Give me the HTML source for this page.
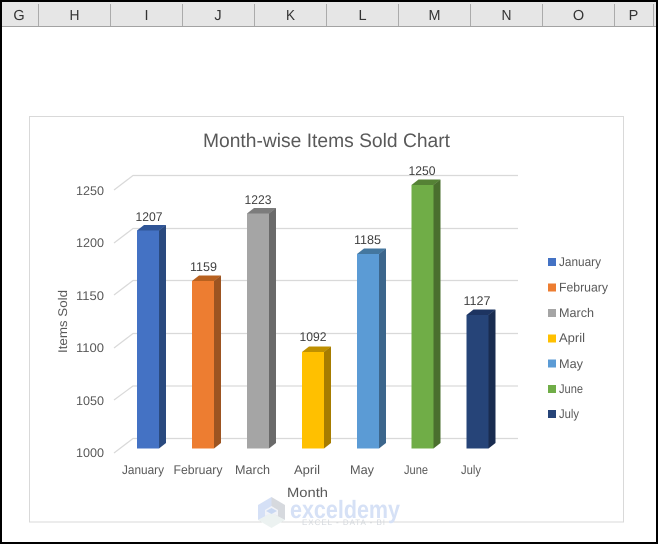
<!DOCTYPE html>
<html>
<head>
<meta charset="utf-8">
<style>
html,body{margin:0;padding:0;width:658px;height:544px;overflow:hidden;background:#000}
svg{display:block}
text{font-family:"Liberation Sans",sans-serif;text-rendering:geometricPrecision}
.h{font-size:14.5px;fill:#333;text-anchor:middle}
.a{font-size:12.6px;fill:#595959}
.d{font-size:12.6px;fill:#404040}
</style>
</head>
<body>
<svg width="658" height="544" viewBox="0 0 658 544" xmlns="http://www.w3.org/2000/svg">
<rect x="2" y="2" width="654" height="540" fill="#fff"/>
<rect x="2" y="2" width="654" height="24" fill="#e6e6e6"/>
<rect x="2" y="26" width="654" height="1" fill="#a3a3a3"/>
<g fill="#ababab">
<rect x="38" y="4" width="1" height="22"/><rect x="110" y="4" width="1" height="22"/><rect x="182" y="4" width="1" height="22"/><rect x="254" y="4" width="1" height="22"/><rect x="326" y="4" width="1" height="22"/><rect x="398" y="4" width="1" height="22"/><rect x="470" y="4" width="1" height="22"/><rect x="542" y="4" width="1" height="22"/><rect x="614" y="4" width="1" height="22"/><rect x="653" y="4" width="1" height="22"/>
</g>
<text class="h" x="19" y="20">G</text>
<text class="h" x="74.5" y="20" textLength="10" lengthAdjust="spacingAndGlyphs">H</text>
<text class="h" x="146.5" y="20">I</text>
<text class="h" x="218" y="20">J</text>
<text class="h" x="290.5" y="20" textLength="9" lengthAdjust="spacingAndGlyphs">K</text>
<text class="h" x="362.5" y="20">L</text>
<text class="h" x="434.5" y="20" textLength="12" lengthAdjust="spacingAndGlyphs">M</text>
<text class="h" x="506.5" y="20" textLength="10" lengthAdjust="spacingAndGlyphs">N</text>
<text class="h" x="578.5" y="20">O</text>
<text class="h" x="633.5" y="20">P</text>

<rect x="29.5" y="116.5" width="594" height="405.5" fill="#fff" stroke="#d9d9d9" stroke-width="1"/>

<text x="203" y="147" font-size="19.5" fill="#595959" textLength="247" lengthAdjust="spacingAndGlyphs">Month-wise Items Sold Chart</text>

<g stroke="#d9d9d9" stroke-width="1.2" fill="none">
<path d="M114 190L133 175.5H518"/>
<path d="M114 243L133 228.5H518"/>
<path d="M114 295L133 280.5H518"/>
<path d="M114 348L133 333.5H518"/>
<path d="M114 400L133 386H518"/>
<path d="M114 453L133 438.5H518"/>
</g>

<g>
<text class="a" x="76" y="195" textLength="28" lengthAdjust="spacingAndGlyphs">1250</text>
<text class="a" x="76" y="247" textLength="28" lengthAdjust="spacingAndGlyphs">1200</text>
<text class="a" x="76" y="300" textLength="28" lengthAdjust="spacingAndGlyphs">1150</text>
<text class="a" x="76" y="352" textLength="28" lengthAdjust="spacingAndGlyphs">1100</text>
<text class="a" x="76" y="405" textLength="28" lengthAdjust="spacingAndGlyphs">1050</text>
<text class="a" x="76" y="457" textLength="28" lengthAdjust="spacingAndGlyphs">1000</text>
</g>

<!-- bars -->
<g>
<path d="M137 230.5l7-5.500h22l-7 5.500z" fill="#2f5597"/><path d="M159 230.500l7-5.500V443l-7 5.500z" fill="#2a4a7f"/><rect x="137" y="230.500" width="22" height="218" fill="#4472c4"/>
<path d="M192 281l7-5.500h22l-7 5.500z" fill="#b8611f"/><path d="M214 281l7-5.500V443l-7 5.500z" fill="#9c5421"/><rect x="192" y="281" width="22" height="167.500" fill="#ed7d31"/>
<path d="M247 213.500l7-5.500h22l-7 5.500z" fill="#7c7c7c"/><path d="M269 213.500l7-5.500V443l-7 5.500z" fill="#6a6a6a"/><rect x="247" y="213.500" width="22" height="235" fill="#a5a5a5"/>
<path d="M302 352l7-5.500h22l-7 5.500z" fill="#bf9000"/><path d="M324 352l7-5.500V443l-7 5.500z" fill="#a67c00"/><rect x="302" y="352" width="22" height="96.500" fill="#ffc000"/>
<path d="M357 254l7-5.500h22l-7 5.500z" fill="#44779f"/><path d="M379 254l7-5.500V443l-7 5.500z" fill="#3c668c"/><rect x="357" y="254" width="22" height="194.500" fill="#5b9bd5"/>
<path d="M411.500 185l7-5.500h22l-7 5.500z" fill="#558235"/><path d="M433.500 185l7-5.500V443l-7 5.500z" fill="#4a6f2e"/><rect x="411.500" y="185" width="22" height="263.500" fill="#70ad47"/>
<path d="M466.500 315l7-5.500h22l-7 5.500z" fill="#1d3461"/><path d="M488.500 315l7-5.500V443l-7 5.500z" fill="#192c50"/><rect x="466.500" y="315" width="22" height="133.500" fill="#264478"/>
</g>

<text class="d" x="135.500" y="221" textLength="27" lengthAdjust="spacingAndGlyphs">1207</text>
<text class="d" x="190" y="271" textLength="27" lengthAdjust="spacingAndGlyphs">1159</text>
<text class="d" x="244.500" y="204" textLength="27" lengthAdjust="spacingAndGlyphs">1223</text>
<text class="d" x="299.500" y="341" textLength="27" lengthAdjust="spacingAndGlyphs">1092</text>
<text class="d" x="354" y="244" textLength="27" lengthAdjust="spacingAndGlyphs">1185</text>
<text class="d" x="408.500" y="175" textLength="27" lengthAdjust="spacingAndGlyphs">1250</text>
<text class="d" x="463.500" y="305" textLength="27" lengthAdjust="spacingAndGlyphs">1127</text>

<text class="a" x="122" y="474" textLength="42" lengthAdjust="spacingAndGlyphs">January</text>
<text class="a" x="173.500" y="474" textLength="49" lengthAdjust="spacingAndGlyphs">February</text>
<text class="a" x="235" y="474" textLength="35" lengthAdjust="spacingAndGlyphs">March</text>
<text class="a" x="294" y="474" textLength="26" lengthAdjust="spacingAndGlyphs">April</text>
<text class="a" x="350" y="474" textLength="24" lengthAdjust="spacingAndGlyphs">May</text>
<text class="a" x="404" y="474" textLength="24" lengthAdjust="spacingAndGlyphs">June</text>
<text class="a" x="461" y="474" textLength="20" lengthAdjust="spacingAndGlyphs">July</text>

<text class="a" x="67" y="353" transform="rotate(-90 67 353)" textLength="63" lengthAdjust="spacingAndGlyphs">Items Sold</text>
<text x="287" y="497" font-size="13.5" fill="#595959" textLength="41" lengthAdjust="spacingAndGlyphs">Month</text>

<!-- legend -->
<rect x="548" y="258" width="8" height="8" fill="#4472c4"/>
<rect x="548" y="283.500" width="8" height="8" fill="#ed7d31"/>
<rect x="548" y="309" width="8" height="8" fill="#a5a5a5"/>
<rect x="548" y="334.500" width="8" height="8" fill="#ffc000"/>
<rect x="548" y="359.500" width="8" height="8" fill="#5b9bd5"/>
<rect x="548" y="385" width="8" height="8" fill="#70ad47"/>
<rect x="548" y="410" width="8" height="8" fill="#264478"/>
<text class="a" x="559" y="266" textLength="42" lengthAdjust="spacingAndGlyphs">January</text>
<text class="a" x="559" y="291.500" textLength="49" lengthAdjust="spacingAndGlyphs">February</text>
<text class="a" x="559" y="317" textLength="35" lengthAdjust="spacingAndGlyphs">March</text>
<text class="a" x="559" y="342" textLength="26" lengthAdjust="spacingAndGlyphs">April</text>
<text class="a" x="559" y="368" textLength="24" lengthAdjust="spacingAndGlyphs">May</text>
<text class="a" x="559" y="393" textLength="24" lengthAdjust="spacingAndGlyphs">June</text>
<text class="a" x="559" y="418" textLength="20" lengthAdjust="spacingAndGlyphs">July</text>

<!-- watermark -->
<g>
<path d="M271.500 497L258 505V520L271.500 513Z" fill="#d5e0f6"/>
<path d="M271.500 497L285 505V520L271.500 513Z" fill="#d6d9de"/>
<path d="M258 520L271.500 528L285 520L271.500 513Z" fill="#ecf2f1"/>
<path d="M265 510L271.500 506L278 510V516L271.500 513L265 516Z" fill="#f1f3f8"/>
<path d="M266 511L271.500 508L277 511L271.500 514Z" fill="#c9d8f2"/>
</g>
<text x="290" y="518" font-size="25" font-weight="bold" fill="#d6e1f6" textLength="110" lengthAdjust="spacingAndGlyphs">exceldemy</text>
<text x="302" y="525" font-size="8" fill="#d5d9de" textLength="83" lengthAdjust="spacing">EXCEL - DATA - BI</text>
</svg>
</body>
</html>
